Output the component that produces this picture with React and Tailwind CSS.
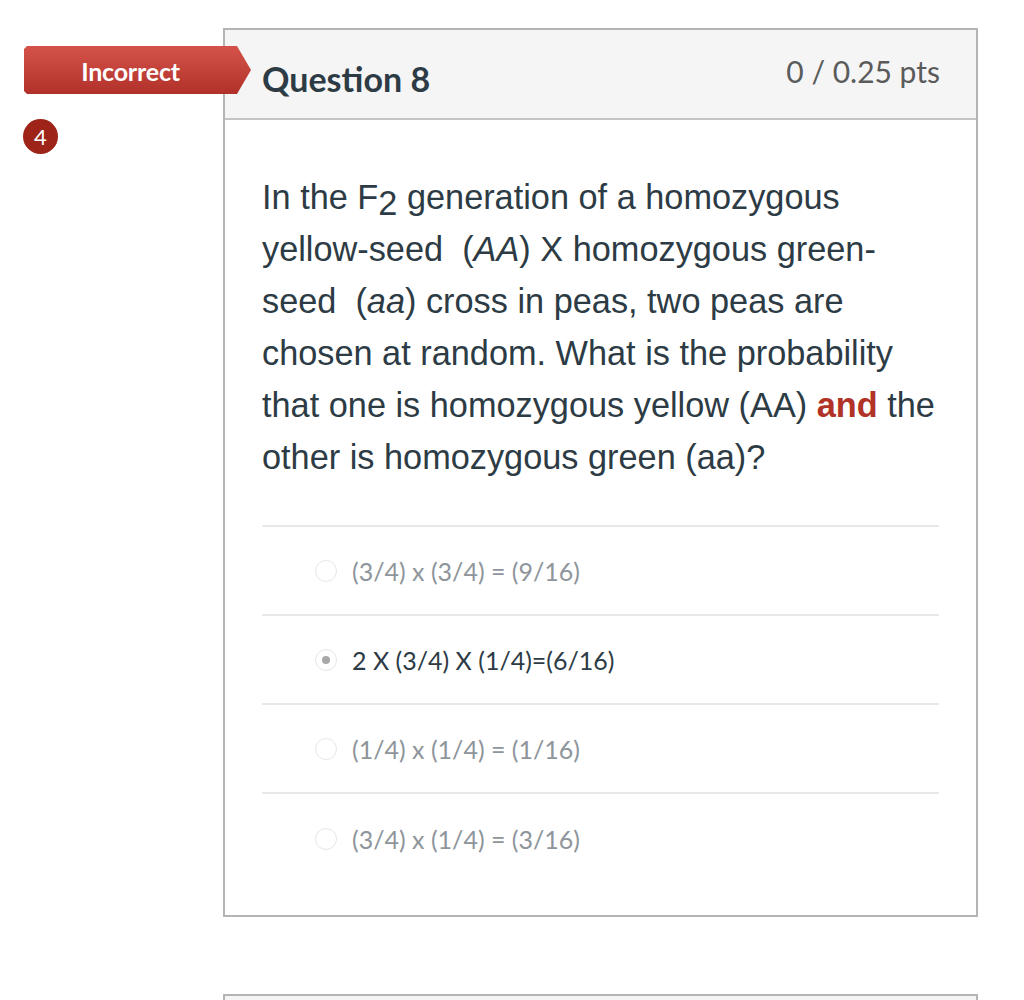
import React from "react";

function Radio({ selected }) {
  return (
    <span className="relative flex h-[22px] w-[22px] shrink-0 items-center justify-center rounded-full border border-[#e6e6e6] bg-white">
      {selected && <span className="h-[8px] w-[8px] rounded-full bg-[#a8a8a8]" />}
    </span>
  );
}

function Answer({ text, selected, last }) {
  return (
    <div className={`flex h-[89px] items-center pl-[53px] ${last ? "" : "border-b-2 border-[#e8e8e8]"}`}>
      <Radio selected={selected} />
      <span
        className={`ml-[15px] pt-[3px] text-[25px] ${selected ? "text-[#2d3b45]" : "text-[#8e959b]"}`}
        style={{ fontFamily: "Lato, 'Liberation Sans', sans-serif" }}
      >
        {text}
      </span>
    </div>
  );
}

export default function App() {
  const lato = { fontFamily: "Lato, 'Liberation Sans', sans-serif" };
  return (
    <div className="min-h-[1000px] bg-white">
      <div className="relative pl-[223px] pt-[28px]">
        {/* Incorrect ribbon */}
        <div
          className="absolute left-[24px] top-[46px] z-10 flex h-[48px] w-[227px] items-center bg-gradient-to-b from-[#d4524a] to-[#b1312a] [clip-path:polygon(3px_0,213px_0,227px_50%,213px_100%,3px_100%,0_calc(100%-3px),0_3px)]"
        >
          <span className="w-[213px] pt-[3px] text-center text-[25px] font-bold tracking-[-0.2px] text-white" style={lato}>
            Incorrect
          </span>
        </div>
        {/* badge */}
        <div
          className="absolute left-[23px] top-[119px] flex h-[35px] w-[35px] items-center justify-center rounded-full bg-[#9e2419] text-[22px] text-white"
          style={lato}
        >
          4
        </div>

        <div className="w-[755px] border-2 border-[#b4b4b4] bg-white">
          <div className="flex h-[90px] items-start justify-between border-b-2 border-[#c4c4c4] bg-[#f5f5f5] pl-[37px] pr-[36px]">
            <h2 className="mt-[29px] text-[34px] font-bold leading-[40px] text-[#2d3b45]" style={lato}>
              Question 8
            </h2>
            <span className="mt-[23px] text-[30px] leading-[36px] text-[#5b5b5b]" style={lato}>
              0 / 0.25 pts
            </span>
          </div>
          <div className="px-[37px] pt-[51px] pb-[32px]">
            <p
              className="text-[34.3px] leading-[52px] text-[#2d3b45]"
              style={{ fontFamily: "'Liberation Sans', Arial, sans-serif" }}
            >
              In the F<span className="relative top-[6px]">2</span> generation of a homozygous
              <br />
              yellow-seed&nbsp; (<i>AA</i>) X homozygous green-
              <br />
              seed&nbsp; (<i>aa</i>) cross in peas, two peas are
              <br />
              chosen at random. What is the probability
              <br />
              that one is homozygous yellow (AA) <b className="text-[#b13328]">and</b> the
              <br />
              other is homozygous green (aa)?
            </p>
            <div className="mt-[42px] border-t-2 border-[#e8e8e8]">
              <Answer text="(3/4) x (3/4) = (9/16)" />
              <Answer text="2 X (3/4) X (1/4)=(6/16)" selected />
              <Answer text="(1/4) x (1/4) = (1/16)" />
              <Answer text="(3/4) x (1/4) = (3/16)" last />
            </div>
          </div>
        </div>

        <div className="mt-[77px] h-[40px] w-[755px] border-x-2 border-t-2 border-[#b4b4b4] bg-[#f5f5f5]" />
      </div>
    </div>
  );
}
